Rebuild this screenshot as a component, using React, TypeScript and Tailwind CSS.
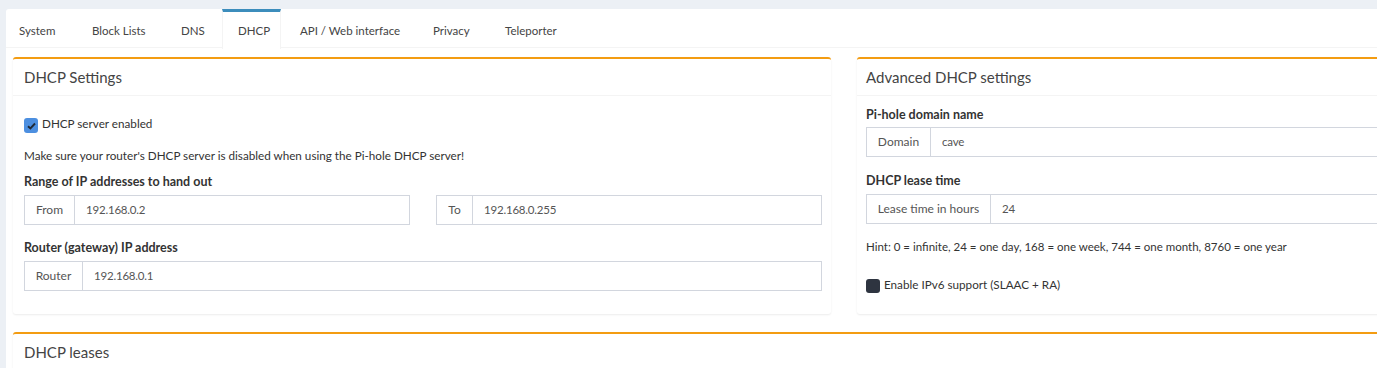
import React from "react";

const font = { fontFamily: "Lato, 'Noto Sans', sans-serif" };

function InputGroup({ addon, value, addonW }: { addon: string; value: string; addonW: string }) {
  return (
    <div className="flex h-[30px] border border-[#d2d6de] text-[#555]">
      <div className={`${addonW} flex items-center justify-center border-r border-[#d2d6de] text-[12px]`}>{addon}</div>
      <div className="flex-1 flex items-center pl-[11px] text-[11.5px] tracking-[-0.2px]">{value}</div>
    </div>
  );
}

function Box({ title, pad = "pl-[11px]", children }: { title: string; pad?: string; children?: React.ReactNode }) {
  return (
    <div className="bg-white border-t-2 border-[#f39c12] rounded-[3px] shadow-[0_1px_2px_rgba(0,0,0,0.08)]">
      <div className={`h-[37px] flex items-center ${pad} border-b border-[#f4f4f4] text-[15px] text-[#444]`}>
        {title}
      </div>
      {children}
    </div>
  );
}

function Check({ checked, label }: { checked: boolean; label: string }) {
  return (
    <div className="flex items-center h-[15px] text-[11.7px] text-[#333]">
      {checked ? (
        <span className="w-[14px] h-[15px] mt-[4px] mr-[4px] rounded-[3px] bg-[#4c8fe0] flex items-center justify-center">
          <svg width="9" height="8" viewBox="0 0 9 8">
            <path d="M1 4.2 L3.4 6.5 L8 1.5" stroke="#1f2a38" strokeWidth="1.9" fill="none" />
          </svg>
        </span>
      ) : (
        <span className="w-[14px] h-[14px] mt-[3px] mr-[4px] rounded-[3px] bg-[#2e3440]" />
      )}
      <span>{label}</span>
    </div>
  );
}

const tabs = [
  { name: "System", w: "w-[71px]", pl: "pl-[13px]" },
  { name: "Block Lists", w: "w-[89px]", pl: "pl-[15px]" },
  { name: "DNS", w: "w-[56px]", pl: "pl-[15px]" },
  { name: "DHCP", w: "w-[59px]", pl: "pl-[15px]", active: true },
  { name: "API / Web interface", w: "w-[133px]", pl: "pl-[15px]" },
  { name: "Privacy", w: "w-[72px]", pl: "pl-[15px]" },
  { name: "Teleporter", w: "w-[90px]", pl: "pl-[15px]" },
];

export default function App() {
  return (
    <div className="min-h-screen bg-[#ecf0f5] overflow-hidden" style={font}>
      <div className="pl-[6px] pt-[9px]">
        <div className="w-[1676px] bg-white rounded-[3px]">
          <div className="flex h-[39px] border-b border-[#f4f4f4] text-[11.5px] text-[#444]">
            {tabs.map((t) =>
              t.active ? (
                <div
                  key={t.name}
                  className={`${t.w} ${t.pl} mr-[4px] h-[40px] flex items-center pt-[1px] bg-white border-t-[3px] border-x border-[#f4f4f4] border-t-[#3c8dbc]`}
                >
                  {t.name}
                </div>
              ) : (
                <div key={t.name} className={`${t.w} ${t.pl} flex items-center pt-[5px]`}>
                  {t.name}
                </div>
              )
            )}
          </div>

          <div className="px-[7px] pt-[9px]">
            <div className="grid grid-cols-[818px_818px] gap-x-[26px]">
              <Box title="DHCP Settings">
                <div className="pl-[11px] pr-[9px] pt-[20px] pb-[23px]">
                  <Check checked label="DHCP server enabled" />
                  <p className="mt-[15px] leading-[18px] text-[11.7px] text-[#333]">
                    Make sure your router's DHCP server is disabled when using the Pi-hole DHCP server!
                  </p>
                  <p className="mt-[9px] leading-[18px] text-[12.5px] font-bold text-[#333]">
                    Range of IP addresses to hand out
                  </p>
                  <div className="mt-[4px] grid grid-cols-[386px_386px] gap-x-[26px]">
                    <InputGroup addon="From" value="192.168.0.2" addonW="w-[50px]" />
                    <InputGroup addon="To" value="192.168.0.255" addonW="w-[36px]" />
                  </div>
                  <p className="mt-[14px] leading-[18px] text-[12.5px] font-bold text-[#333]">
                    Router (gateway) IP address
                  </p>
                  <div className="mt-[4px]">
                    <InputGroup addon="Router" value="192.168.0.1" addonW="w-[58px]" />
                  </div>
                </div>
              </Box>

              <Box title="Advanced DHCP settings" pad="pl-[9px]">
                <div className="pl-[9px] pr-[9px] pt-[10px] pb-[22px]">
                  <p className="leading-[18px] text-[12.5px] font-bold text-[#333]">Pi-hole domain name</p>
                  <div className="mt-[3px]">
                    <InputGroup addon="Domain" value="cave" addonW="w-[64px]" />
                  </div>
                  <p className="mt-[15px] leading-[18px] text-[12.5px] font-bold text-[#333]">DHCP lease time</p>
                  <div className="mt-[4px]">
                    <InputGroup addon="Lease time in hours" value="24" addonW="w-[124px]" />
                  </div>
                  <p className="mt-[14px] leading-[18px] text-[11.5px] text-[#333]">
                    Hint: 0 = infinite, 24 = one day, 168 = one week, 744 = one month, 8760 = one year
                  </p>
                  <div className="mt-[21px]">
                    <Check checked={false} label="Enable IPv6 support (SLAAC + RA)" />
                  </div>
                </div>
              </Box>
            </div>

            <div className="mt-[18px]">
              <Box title="DHCP leases">
                <div className="h-[60px]" />
              </Box>
            </div>
          </div>
        </div>
      </div>
    </div>
  );
}
